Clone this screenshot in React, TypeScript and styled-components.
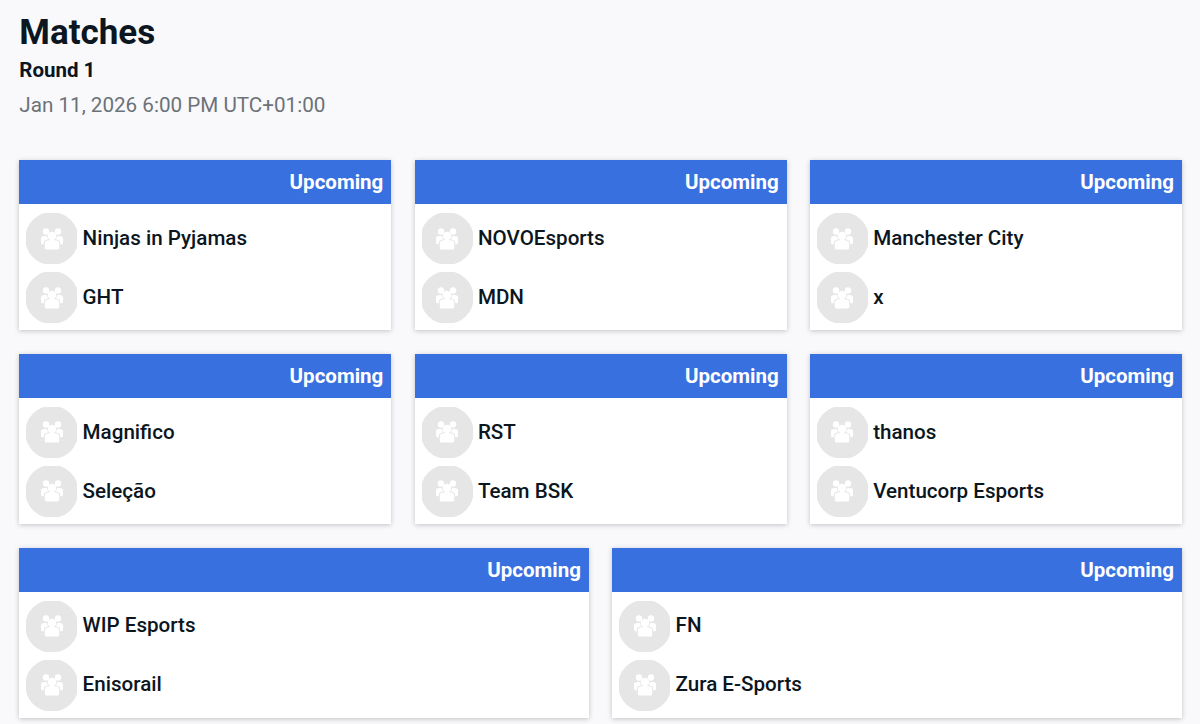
import React from "react";
import styled, { createGlobalStyle } from "styled-components";

const Global = createGlobalStyle`
  html, body { margin: 0; padding: 0; background: #f9f9fc; }
  body { font-family: Roboto, "Liberation Sans", sans-serif; color: #0b1620; overflow: hidden; }
`;
const Page = styled.main`
  box-sizing: border-box;
  width: 1200px;
  height: 724px;
  overflow: hidden;
  padding: 13px 18.1px 0 19.3px;
`;
const Title = styled.h1`
  margin: 0;
  font-size: 35px;
  line-height: 40px;
  font-weight: 700;
`;
const Round = styled.h2`
  margin: 5px 0 0;
  font-size: 20.5px;
  line-height: 24px;
  font-weight: 700;
`;
const DateLine = styled.p`
  margin: 11px 0 0;
  font-size: 20.65px;
  line-height: 24px;
  font-weight: 400;
  color: #6b7278;
`;
const Grid = styled.section`
  display: grid;
  grid-template-columns: repeat(6, 1fr);
  column-gap: 23.3px;
  row-gap: 23.5px;
  margin-top: 43px;
`;
const Card = styled.article<{ $wide: boolean }>`
  grid-column: span ${(p) => (p.$wide ? 3 : 2)};
  height: 170.4px;
  background: #fff;
  box-shadow: 0 1px 5px rgba(0, 0, 0, 0.22);
  display: flex;
  flex-direction: column;
`;
const CardHeader = styled.header`
  height: 44px;
  flex: none;
  box-sizing: border-box;
  padding: 0 8px 0 0;
  background: #3970e0;
  color: #fff;
  font-size: 20.5px;
  font-weight: 700;
  display: flex;
  align-items: center;
  justify-content: flex-end;
`;
const Teams = styled.div`
  display: flex;
  flex-direction: column;
  gap: 8px;
  padding: 9px 7px 0;
`;
const Team = styled.div`
  display: flex;
  align-items: center;
  gap: 5.3px;
  height: 51px;
`;
const Avatar = styled.div`
  width: 51px;
  height: 51px;
  clip-path: circle(26.6px at 50% 50%);
  background: #e6e6e6;
  display: flex;
  align-items: center;
  justify-content: center;
`;
const TeamName = styled.span`
  font-size: 20.6px;
  font-weight: 500;
  color: #0b1620;
  position: relative;
  top: -0.9px;
`;
const GroupGlyph = styled.svg`
  filter: blur(0.4px);
`;

const GroupIcon = () => (
  <GroupGlyph width="24" height="22" viewBox="0 0 24 22" fill="#fff" aria-hidden="true">
    <circle cx="6" cy="3.500" r="3.200" />
    <circle cx="18" cy="3.500" r="3.200" />
    <circle cx="12" cy="8" r="4.300" />
    <path d="M4.800 15.500c0-2.600 2.300-3.500 7.200-3.500s7.200.9 7.200 3.500v4.500c0 .8-.7 1.500-1.500 1.500H6.300c-.8 0-1.500-.7-1.500-1.500z" />
    <path d="M1 10.500c0-1.800 1.400-2.500 4-2.500.7 0 1.300.1 1.800.2.200 1.300.8 2.300 1.700 3-3 .3-4.700 1.500-4.700 4v1H2.500c-.9 0-1.500-.6-1.500-1.500z" />
    <path d="M23 10.500c0-1.800-1.400-2.500-4-2.500-.7 0-1.300.1-1.800.2-.2 1.300-.8 2.300-1.700 3 3 .3 4.700 1.500 4.700 4v1h1.300c.9 0 1.500-.6 1.500-1.500z" />
  </GroupGlyph>
);

const matches: [string, string][] = [
  ["Ninjas in Pyjamas", "GHT"],
  ["NOVOEsports", "MDN"],
  ["Manchester City", "x"],
  ["Magnifico", "Seleção"],
  ["RST", "Team BSK"],
  ["thanos", "Ventucorp Esports"],
  ["WIP Esports", "Enisorail"],
  ["FN", "Zura E-Sports"],
];

export default function App() {
  return (
    <Page>
      <Global />
      <Title>Matches</Title>
      <Round>Round 1</Round>
      <DateLine>Jan 11, 2026 6:00 PM UTC+01:00</DateLine>
      <Grid>
        {matches.map((m, i) => (
          <Card key={i} $wide={i >= 6}>
            <CardHeader>Upcoming</CardHeader>
            <Teams>
              {m.map((t) => (
                <Team key={t}>
                  <Avatar><GroupIcon /></Avatar>
                  <TeamName>{t}</TeamName>
                </Team>
              ))}
            </Teams>
          </Card>
        ))}
      </Grid>
    </Page>
  );
}
